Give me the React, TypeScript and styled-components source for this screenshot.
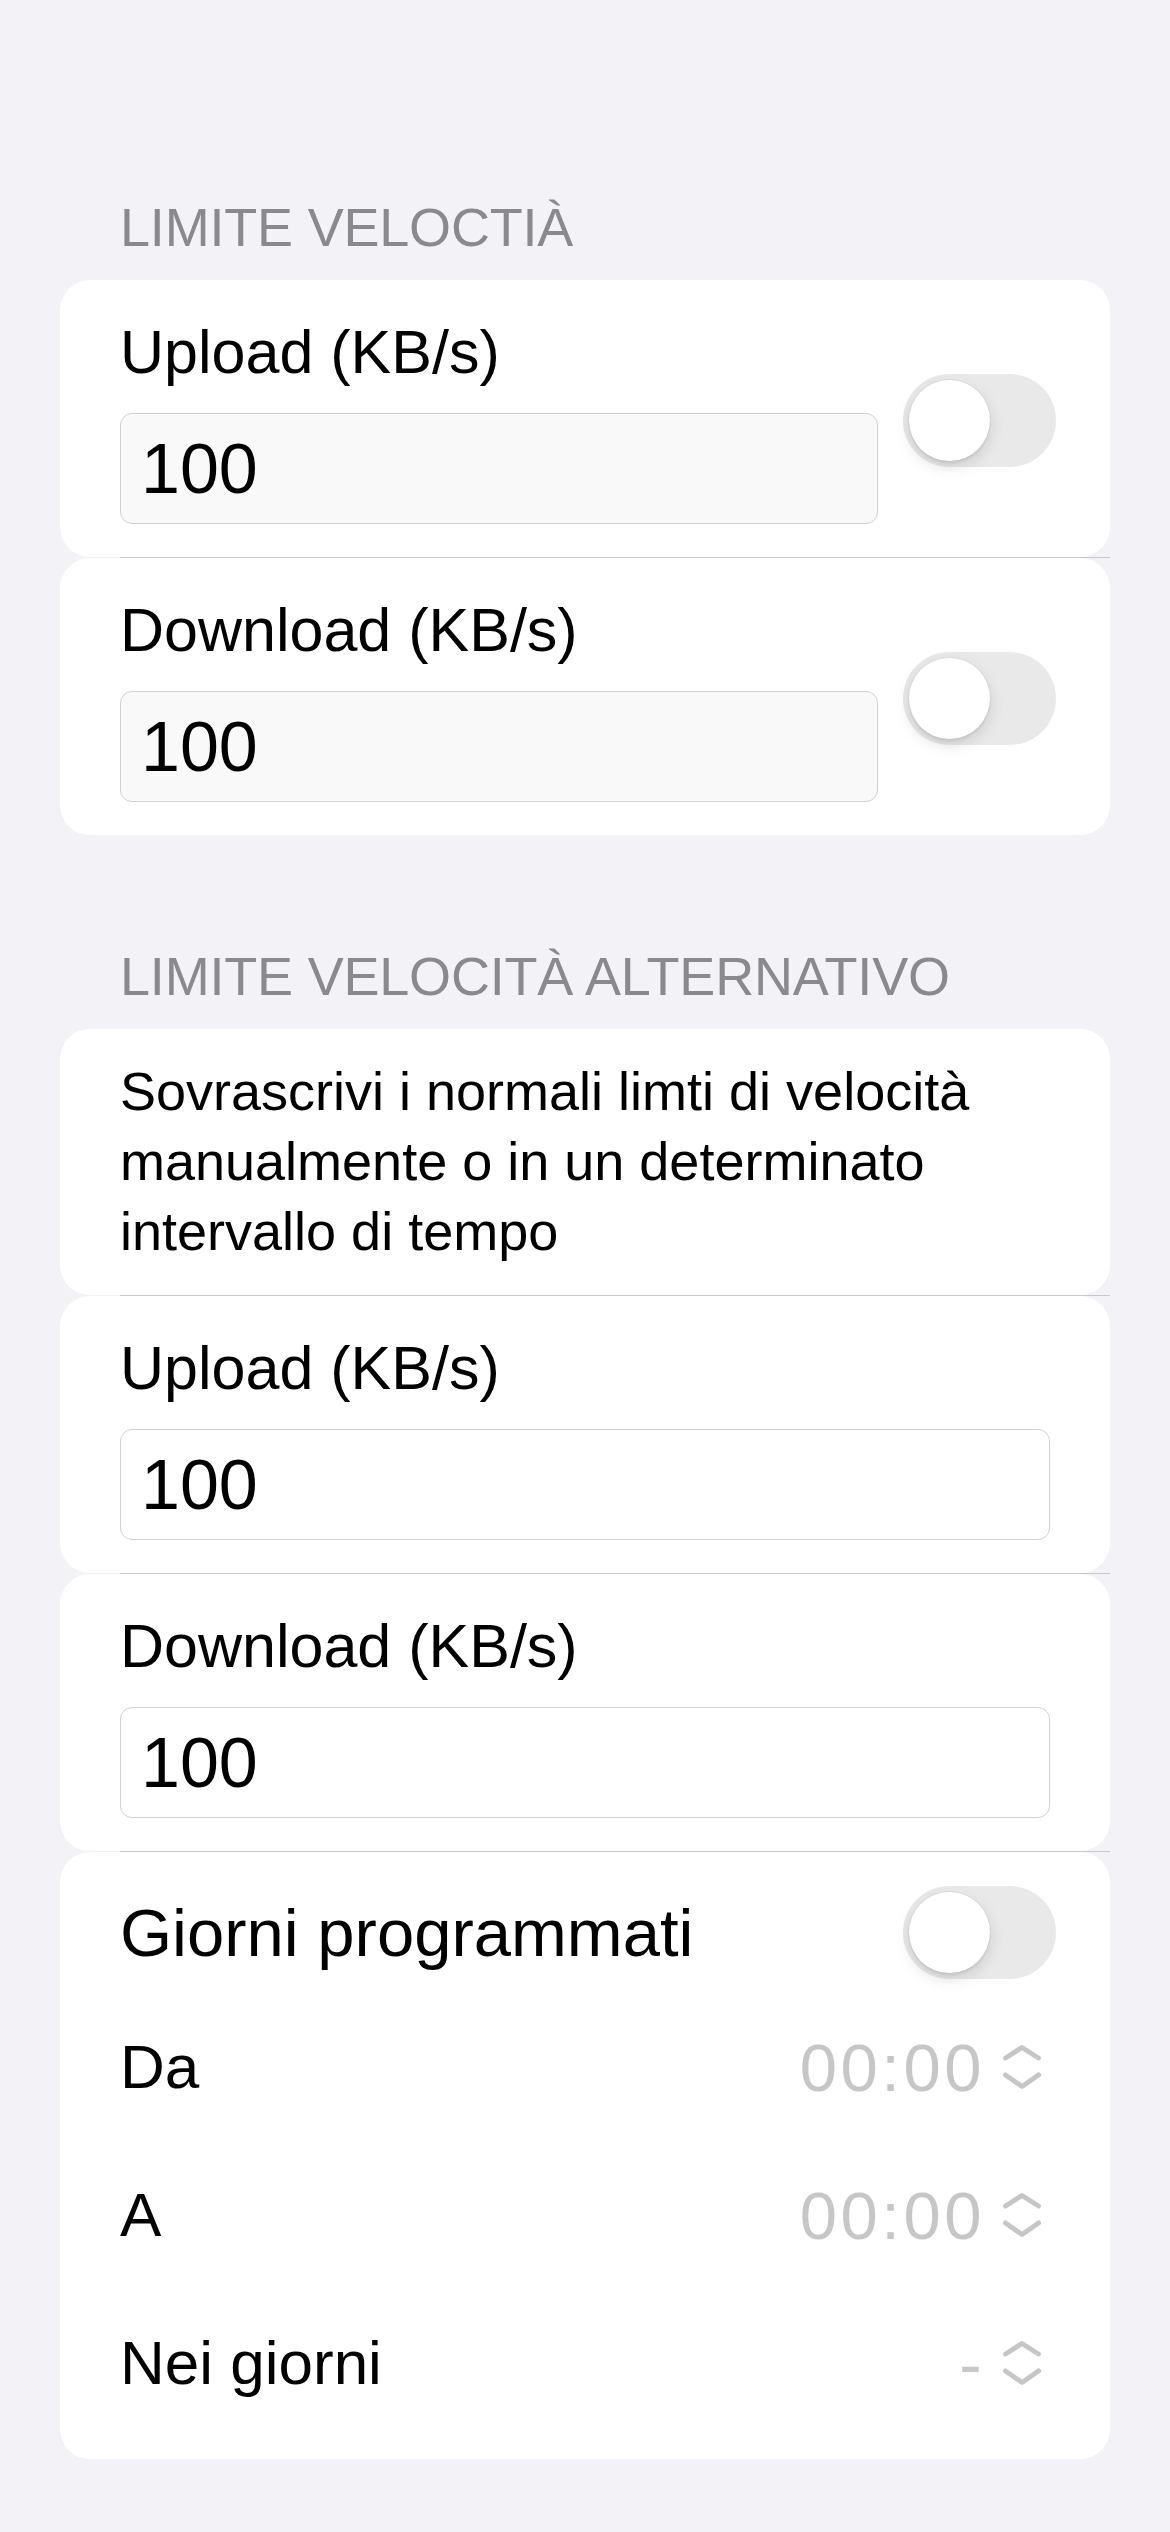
import React from "react";
import styled, { createGlobalStyle } from "styled-components";

const GlobalStyle = createGlobalStyle`
  html, body {
    margin: 0;
    padding: 0;
    background: #f2f2f7;
  }
  body {
    font-family: "Liberation Sans", Arial, sans-serif;
    color: #000;
    -webkit-font-smoothing: antialiased;
  }
  * { box-sizing: border-box; }
`;

const Page = styled.main`
  min-height: 2532px;
  padding: 195px 60px 75px;
  display: flex;
  flex-direction: column;
`;

const Section = styled.section<{ $spaced?: boolean }>`
  display: flex;
  flex-direction: column;
  margin-top: ${(p) => (p.$spaced ? "109px" : "0")};
`;

const SectionHeader = styled.h2`
  margin: 0 0 21px;
  padding-left: 60px;
  font-size: 54px;
  line-height: 64px;
  font-weight: 400;
  color: #8a8a8e;
  text-transform: uppercase;
  letter-spacing: -0.2px;
`;

const Group = styled.div`
  display: flex;
  flex-direction: column;
`;

const Card = styled.div`
  background: #fff;
  border-radius: 30px;
`;

const Divider = styled.div`
  height: 1px;
  margin-left: 60px;
  background: #c8c8cc;
`;

const FieldCard = styled(Card)<{ $withToggle?: boolean }>`
  display: flex;
  align-items: center;
  gap: 25px;
  padding: 36px ${(p) => (p.$withToggle ? "54px" : "60px")} 33px 60px;
`;

const FieldColumn = styled.div`
  flex: 1;
  display: flex;
  flex-direction: column;
  gap: 25px;
  min-width: 0;
`;

const FieldLabel = styled.label`
  font-size: 61px;
  line-height: 72px;
`;

const NumberInput = styled.input<{ $muted?: boolean }>`
  width: 100%;
  height: 111px;
  padding: 0 20px;
  border: 1px solid #d1d1d4;
  border-radius: 12px;
  background: ${(p) => (p.$muted ? "#f9f9f9" : "#ffffff")};
  font-family: "Liberation Sans", Arial, sans-serif;
  font-size: 70px;
  color: #000;
  outline: none;
`;

const SwitchTrack = styled.div<{ $on?: boolean }>`
  flex: none;
  width: 153px;
  height: 93px;
  padding: 6px;
  border-radius: 46.5px;
  background: ${(p) => (p.$on ? "#34c759" : "#e9e9ea")};
  display: flex;
  justify-content: ${(p) => (p.$on ? "flex-end" : "flex-start")};
  align-items: center;
`;

const SwitchKnob = styled.div`
  width: 81px;
  height: 81px;
  border-radius: 50%;
  background: #fff;
  box-shadow: 0 0 0 1px rgba(0, 0, 0, 0.04), 0 6px 16px rgba(0, 0, 0, 0.12),
    0 3px 2px rgba(0, 0, 0, 0.05);
`;

const DescriptionCard = styled(Card)`
  padding: 27px 60px 29px;
  font-size: 54px;
  line-height: 70px;
`;

const ScheduleCard = styled(Card)`
  padding: 34px 60px 22px;
  display: flex;
  flex-direction: column;
`;

const ToggleRow = styled.div`
  display: flex;
  align-items: center;
  justify-content: space-between;
  height: 93px;
  margin-right: -6px;
  margin-bottom: 14px;
`;

const ToggleTitle = styled.span`
  font-size: 67px;
  line-height: 79px;
`;

const PickerRow = styled.div`
  display: flex;
  align-items: center;
  justify-content: space-between;
  height: 148px;
`;

const PickerLabel = styled.span`
  font-size: 62px;
  line-height: 74px;
`;

const PickerValue = styled.div`
  display: flex;
  align-items: center;
  gap: 15px;
  margin-right: 6px;
`;

const ValueText = styled.span`
  font-size: 67px;
  line-height: 79px;
  letter-spacing: 3.5px;
  color: #c6c6c8;
`;

const Switch = ({ on }: { on?: boolean }) => (
  <SwitchTrack $on={on} role="switch" aria-checked={!!on}>
    <SwitchKnob />
  </SwitchTrack>
);

const UpDownChevron = () => (
  <svg width="44" height="50" viewBox="0 0 44 50" fill="none" aria-hidden="true">
    <path
      d="M5.5 16 L22 5.5 L38.5 16"
      stroke="#c6c6c8"
      strokeWidth="5"
      strokeLinecap="round"
      strokeLinejoin="round"
    />
    <path
      d="M5.5 33 L22 44.5 L38.5 33"
      stroke="#c6c6c8"
      strokeWidth="5"
      strokeLinecap="round"
      strokeLinejoin="round"
    />
  </svg>
);

const Field = ({
  label,
  value,
  toggle,
}: {
  label: string;
  value: string;
  toggle?: boolean;
}) => (
  <FieldCard $withToggle={toggle}>
    <FieldColumn>
      <FieldLabel>{label}</FieldLabel>
      <NumberInput $muted={toggle} defaultValue={value} inputMode="numeric" />
    </FieldColumn>
    {toggle && <Switch />}
  </FieldCard>
);

const Picker = ({ label, value }: { label: string; value: string }) => (
  <PickerRow>
    <PickerLabel>{label}</PickerLabel>
    <PickerValue>
      <ValueText>{value}</ValueText>
      <UpDownChevron />
    </PickerValue>
  </PickerRow>
);

export default function App() {
  return (
    <>
      <GlobalStyle />
      <Page>
        <Section>
          <SectionHeader>Limite Veloctià</SectionHeader>
          <Group>
            <Field label="Upload (KB/s)" value="100" toggle />
            <Divider />
            <Field label="Download (KB/s)" value="100" toggle />
          </Group>
        </Section>

        <Section $spaced>
          <SectionHeader>Limite Velocità Alternativo</SectionHeader>
          <Group>
            <DescriptionCard>
              Sovrascrivi i normali limti di velocità manualmente o in un
              determinato intervallo di tempo
            </DescriptionCard>
            <Divider />
            <Field label="Upload (KB/s)" value="100" />
            <Divider />
            <Field label="Download (KB/s)" value="100" />
            <Divider />
            <ScheduleCard>
              <ToggleRow>
                <ToggleTitle>Giorni programmati</ToggleTitle>
                <Switch />
              </ToggleRow>
              <Picker label="Da" value="00:00" />
              <Picker label="A" value="00:00" />
              <Picker label="Nei giorni" value="-" />
            </ScheduleCard>
          </Group>
        </Section>
      </Page>
    </>
  );
}
